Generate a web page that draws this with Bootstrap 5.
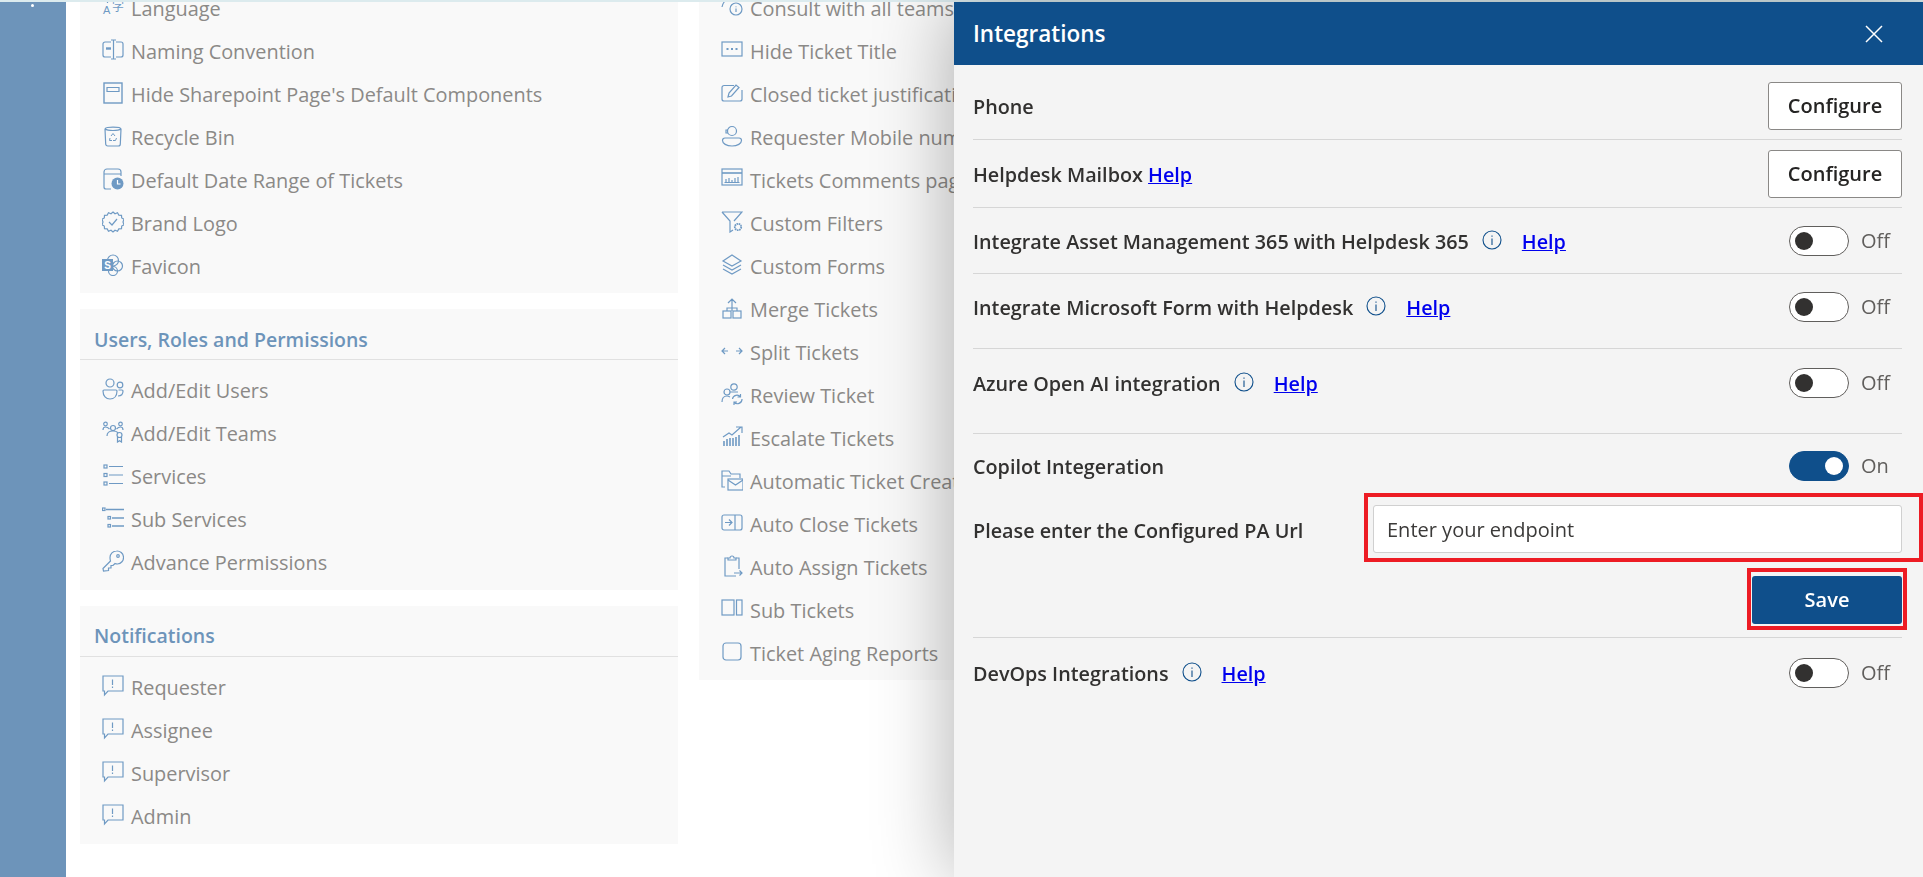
<!DOCTYPE html>
<html lang="en">
<head>
  <meta charset="UTF-8" />
  <meta name="viewport" content="width=device-width, initial-scale=1" />
  <title>Integrations</title>
  <link href="https://cdn.jsdelivr.net/npm/bootstrap@5.3.0/dist/css/bootstrap.min.css" rel="stylesheet" />
  <style>
    html, body {
      height: 100%;
      overflow: hidden;
      background: #fff;
      font-family: "Open Sans", "Liberation Sans", sans-serif;
    }

    .top-line { height: 2px; background: #dcebee; }

    .side-rail {
      width: 66px;
      background: #6d94ba;
      padding: 2px 0 0 31px;
    }
    .rail-dot { display: block; width: 3px; height: 3px; border-radius: 50%; background: #fff; }

    .page-body { height: 875px; overflow: hidden; }
    .settings-area { padding-left: 14px; margin-top: -15px; gap: 21px; }
    .settings-col { width: 598px; flex: none; gap: 16px; }

    .settings-card { background: #f9f9f9; padding-bottom: 5px; }
    .settings-head {
      height: 51px;
      padding: 19px 14px 0;
      border-bottom: 1px solid #e1e1e1;
      margin-bottom: 9px;
      color: #6d94ba;
      font-size: 19.5px;
      font-weight: 600;
      line-height: 24px;
    }
    .settings-card:last-child .settings-head { padding-top: 18px; }
    .settings-head ~ .settings-item:last-child { margin-bottom: 1px; }
    .settings-item {
      height: 43px;
      padding-left: 22px;
      gap: 7px;
      color: #8b8987;
      font-size: 19.9px;
      white-space: nowrap;
    }
    .item-icon {
      width: 22px;
      height: 22px;
      flex: none;
      margin-bottom: 4px;
      fill: none;
      stroke: #6f9ac4;
      stroke-width: 1.2;
    }

    .integrations-panel.offcanvas {
      --bs-offcanvas-width: 969px;
      top: 2px;
      border-left: 0;
      background: #f4f4f4;
      box-shadow: 0 0 75px rgba(0, 0, 0, .32);
    }
    .panel-head {
      height: 63px;
      padding: 0 39px 0 19px;
      background: #0f4f8b;
      color: #fff;
      font-size: 22.5px;
      font-weight: 600;
    }
    .panel-close { background: none; border: 0; padding: 0; line-height: 0; }
    .panel-body { padding: 0 21px 0 19px; color: #323130; font-size: 19.8px; font-weight: 600; }

    .panel-row { border-bottom: 1px solid #d6d6d6; }
    .row-label { padding-top: 2px; }
    .row-phone { height: 75px; padding-top: 8px; }
    .row-mailbox { height: 68px; }
    .row-asset { height: 66px; }
    .row-form { height: 75px; padding-bottom: 8px; }
    .row-azure { height: 85px; padding-bottom: 16px; }
    .row-devops { height: 70px; border-bottom: 0; }

    .panel-body a { color: #00e; }
    .info-icon { width: 20px; height: 20px; margin: 0 20px 4px 13px; fill: none; stroke: #0f4f8b; stroke-width: 1.1; flex: none; }

    .btn-configure {
      width: 134px;
      height: 48px;
      background: #fff;
      border: 1px solid #8a8886;
      border-radius: 3px;
      color: #252423;
      font-size: 20px;
      font-weight: 600;
    }

    .switch-wrap { width: 113px; gap: 12px; font-weight: 400; color: #605e5c; font-size: 20px; }
    .switch-track {
      width: 60px;
      height: 30px;
      flex: none;
      padding: 0 5px;
      background: #fff;
      border: 1px solid #605e5c;
      border-radius: 15px;
    }
    .switch-thumb { width: 18px; height: 18px; border-radius: 50%; background: #323130; }
    .switch-track.is-on { background: #0f4f8b; border-color: #0f4f8b; justify-content: flex-end; }
    .is-on .switch-thumb { background: #fff; }

    .row-copilot { padding-top: 17px; }
    .copilot-line { height: 30px; }
    .url-line { margin-top: 12px; }
    .url-label { width: 391px; flex: none; padding-top: 6px; }
    .red-box { border: 4px solid #ed1c24; background: #f4f4f4; }
    .url-box { flex: 1; margin-right: -21px; padding: 8px 17px 5px 5px; height: 69px; }
    .url-input {
      height: 48px;
      border: 1px solid #d0d0d0;
      border-radius: 3px;
      color: #323130;
      font-size: 20px;
      font-weight: 400;
      padding: 0 13px;
    }
    .url-input::placeholder { color: #3b3a39; opacity: 1; }
    .save-line { margin-top: 6px; padding-bottom: 7px; }
    .save-box { margin-right: -5px; padding: 4px 1px 2px; }
    .btn-save {
      display: block;
      width: 150px;
      height: 48px;
      background: #0f4f8b;
      border: 0;
      border-radius: 3px;
      color: #fff;
      font-size: 20px;
      font-weight: 600;
    }
  </style>
</head>
<body>
  <!-- icon sprite -->
  <svg width="0" height="0" class="position-absolute">
    <symbol id="i-lang" viewBox="0 0 22 22">
      <path d="M1 3h9M5.500 3v4" />
      <text x="1" y="18" font-size="11" fill="#6f9ac4" stroke="none" font-family="Liberation Sans, sans-serif">A</text>
      <text x="10" y="15" font-size="12" fill="#6f9ac4" stroke="none" font-family="Noto Sans CJK SC, sans-serif">字</text>
    </symbol>
    <symbol id="i-naming" viewBox="0 0 22 22">
      <path d="M9 3H3a2 2 0 0 0-2 2v11a2 2 0 0 0 2 2h6M14 3h5a2 2 0 0 1 2 2v11a2 2 0 0 1-2 2h-5"/>
      <path d="M9 1h5M9 20h5M11.500 1v19"/>
      <path d="M4 9.500h5" stroke-width="2.400"/>
    </symbol>
    <symbol id="i-hide" viewBox="0 0 22 22">
      <rect x="2" y="1" width="18" height="20" stroke-width="1.400"/>
      <path d="M5 5.500h12v4H5zM2 11"/>
    </symbol>
    <symbol id="i-bin" viewBox="0 0 22 22">
      <path d="M3 4c0-2.500 16-2.500 16 0M3 4c3 2 13 2 16 0M3 4l.7 15a2 2 0 0 0 2 2h10.600a2 2 0 0 0 2-2L19 4"/>
      <path d="M9 11l2-2.500 2 2.500M14.500 13l-1 2.500h-2.500M8 13l-.5 2.500h2.500" stroke-width="1"/>
    </symbol>
    <symbol id="i-date" viewBox="0 0 22 22">
      <path d="M2 19V4a3 3 0 0 1 3-3h11a3 3 0 0 1 3 3v4M2 6h17M2 19a2 2 0 0 0 2 2h5"/>
      <circle cx="15.500" cy="15.500" r="6" fill="#6f9ac4" stroke="none"/>
      <path d="M15.500 12v4h3" stroke="#fff"/>
    </symbol>
    <symbol id="i-brand" viewBox="0 0 22 22">
      <path d="M11 1l2 1.800 2.500-1 1.300 2.300 2.700.2.200 2.700 2.300 1.300-1 2.700 1 2.700-2.300 1.300-.2 2.700-2.700.2-1.300 2.300-2.500-1L11 21l-2-1.800-2.500 1-1.300-2.300-2.700-.2-.2-2.700L0 13.700l1-2.700-1-2.700 2.300-1.300.2-2.700 2.700-.2 1.300-2.300 2.500 1z"/>
      <path d="M7 11l3 3 5-6"/>
    </symbol>
    <symbol id="i-sp" viewBox="0 0 22 22">
      <circle cx="11" cy="6.500" r="5.500"/>
      <circle cx="15.500" cy="12" r="5"/>
      <circle cx="11" cy="17" r="4.500"/>
      <rect x="0" y="5" width="11" height="12" fill="#6f9ac4" stroke="none"/>
      <text x="5.500" y="15" text-anchor="middle" font-size="10" font-weight="700" fill="#fff" stroke="none" font-family="Liberation Sans, sans-serif">S</text>
    </symbol>
    <symbol id="i-users" viewBox="0 0 22 22">
      <circle cx="8" cy="5" r="4"/>
      <circle cx="18" cy="7" r="2.800"/>
      <path d="M2 12h12a1 1 0 0 1 1 1c0 5-3 8-7 8s-7-3-7-8a1 1 0 0 1 1-1zM16.500 12h3.500a1 1 0 0 1 1 1c0 3-2 5-5 5"/>
    </symbol>
    <symbol id="i-teams" viewBox="0 0 22 22">
      <circle cx="3.500" cy="3" r="1.800"/>
      <circle cx="18.500" cy="3" r="1.800"/>
      <circle cx="11" cy="7" r="2.500"/>
      <circle cx="17.500" cy="14" r="2.500"/>
      <path d="M1 9c0-2 1-3 2.500-3s3 1 4 2M21 9c0-2-1-3-2.500-3s-3 1-4 2M5 15c0-3 2-5 6-5s4 1 5 2M15.500 16v5l2-1.300 2 1.300v-5"/>
    </symbol>
    <symbol id="i-services" viewBox="0 0 22 22">
      <path d="M7 2.500h14M7 11h14M7 19.500h14"/>
      <rect x="2" y="1" width="3" height="3"/>
      <rect x="2" y="9.500" width="3" height="3"/>
      <rect x="2" y="18" width="3" height="3"/>
    </symbol>
    <symbol id="i-subsvc" viewBox="0 0 22 22">
      <path d="M4 2.500h18M10 11h12M10 19h12" stroke-width="1.400"/>
      <rect x=".5" y="1" width="2.500" height="2.500"/>
      <rect x="6" y="9.500" width="2.500" height="2.500"/>
      <rect x="6" y="17.500" width="2.500" height="2.500"/>
    </symbol>
    <symbol id="i-key" viewBox="0 0 22 22">
      <path d="M14.500 1a6.500 6.500 0 0 1 1 13c-1 0-2-.2-2.500-.5L11 15.500H9V18H6.500v2.500l-5 .5L1 18.500l7.500-7.500c-.2-.7-.5-1.700-.5-3.500A6.500 6.500 0 0 1 14.500 1z"/>
      <circle cx="16" cy="6" r="1.300"/>
    </symbol>
    <symbol id="i-alert" viewBox="0 0 22 22">
      <path d="M1 1h20v15H6l-3.500 4V16H1z"/>
      <path d="M10.500 4.500v5.500M10.500 11.500v1.500"/>
    </symbol>
    <symbol id="i-consult" viewBox="0 0 22 22">
      <circle cx="15" cy="13" r="6"/>
      <path d="M15 10.500v.8M15 12.500v3.500M1 11c1-5 4-7 6-7M5 1l4 3"/>
    </symbol>
    <symbol id="i-dots" viewBox="0 0 22 22">
      <rect x="1" y="3" width="20" height="14"/>
      <path d="M5.500 10h2M10 10h2M14.500 10h2" stroke-width="2"/>
    </symbol>
    <symbol id="i-note" viewBox="0 0 22 22">
      <path d="M13 3.500H3a2 2 0 0 0-2 2V17a2 2 0 0 0 2 2h16a2 2 0 0 0 2-2V8"/>
      <path d="M7 15l1-4 7-8 3 2.500-7.500 8.500z"/>
    </symbol>
    <symbol id="i-mobile" viewBox="0 0 22 22">
      <circle cx="11" cy="6" r="4.500"/>
      <path d="M7 5h-2v3h2"/>
      <path d="M4 13h14a2.500 2.500 0 0 1 2.500 2.500c0 3-4 5.500-9.500 5.500s-9.500-2.500-9.500-5.500A2.500 2.500 0 0 1 4 13z"/>
    </symbol>
    <symbol id="i-chart" viewBox="0 0 22 22">
      <rect x="1" y="1" width="20" height="16"/>
      <path d="M1 5h20" stroke-width="1.600"/>
      <path d="M5 14v-3M8 14v-4M11 14v-2M14 14v-4M17 14v-5M3.500 14.500h15"/>
    </symbol>
    <symbol id="i-filter" viewBox="0 0 22 22">
      <path d="M1 1h20l-8 9M1 1l8 9v11l3-2"/>
      <circle cx="17" cy="16" r="3.200" stroke-width="1.800" stroke-dasharray="1.600 .6"/>
    </symbol>
    <symbol id="i-layers" viewBox="0 0 22 22">
      <path d="M11 1l9 6-9 5-9-5zM2 11l9 5 9-5M2 15l9 5 9-5"/>
    </symbol>
    <symbol id="i-merge" viewBox="0 0 22 22">
      <rect x="2" y="14" width="8" height="7"/>
      <rect x="12" y="14" width="8" height="7"/>
      <path d="M11 14V2M7 6l4-4 4 4M6 14v-3h10v3"/>
    </symbol>
    <symbol id="i-split" viewBox="0 0 22 22">
      <path d="M1 11h6M4 8l-3 3 3 3M15 11h6M18 8l3 3-3 3"/>
    </symbol>
    <symbol id="i-review" viewBox="0 0 22 22">
      <circle cx="13" cy="4" r="3.200"/>
      <circle cx="6" cy="9" r="3"/>
      <path d="M1 19c0-4 2-6 5-6 1 0 2 .5 3 1M9 9h8"/>
      <path d="M11.500 16a4.500 4.500 0 0 1 8-2M21 16a4.500 4.500 0 0 1-8 3M19.500 11v3h-3M13 22v-3h3"/>
    </symbol>
    <symbol id="i-escalate" viewBox="0 0 22 22">
      <path d="M2 11l6-4 3 2 9-8M15 1h6v6"/>
      <path d="M3 20v-5M6 20v-7M9 20v-8M12 20v-8M15 20v-9M18 20v-11" stroke-width="1.600"/>
    </symbol>
    <symbol id="i-mailfolder" viewBox="0 0 22 22">
      <path d="M4 18H1V2h7l2 3h9v4M1 7h9"/>
      <rect x="7" y="10" width="15" height="11"/>
      <path d="M7 11l7.500 5 7.500-5"/>
    </symbol>
    <symbol id="i-close-t" viewBox="0 0 22 22">
      <rect x="1" y="3" width="20" height="15" rx="2"/>
      <path d="M14 3v15M4 10.500h7M8 7.500l3 3-3 3"/>
    </symbol>
    <symbol id="i-clip" viewBox="0 0 22 22">
      <path d="M7 3H4v18h11M15 3h3v11"/>
      <path d="M7 5V3h2a2 2 0 0 1 4 0h2v2z"/>
      <path d="M13 18h8M18.500 15.500l2.500 2.500-2.500 2.500"/>
    </symbol>
    <symbol id="i-sub" viewBox="0 0 22 22">
      <rect x="1" y="2" width="12" height="15"/>
      <rect x="15.500" y="2" width="5.500" height="15"/>
    </symbol>
    <symbol id="i-square" viewBox="0 0 22 22">
      <rect x="2" y="2" width="18" height="17" rx="3"/>
    </symbol>
  </svg>

  <div class="top-line"></div>
  <div class="d-flex page-body">
    <div class="side-rail flex-shrink-0"><span class="rail-dot"></span></div>

    <div class="d-flex align-items-start settings-area">
      <!-- Left settings -->
      <div class="d-flex flex-column settings-col">
        <div class="settings-card">
          <div class="d-flex align-items-center settings-item"><svg class="item-icon"><use href="#i-lang"/></svg>Language</div>
          <div class="d-flex align-items-center settings-item"><svg class="item-icon"><use href="#i-naming"/></svg>Naming Convention</div>
          <div class="d-flex align-items-center settings-item"><svg class="item-icon"><use href="#i-hide"/></svg>Hide Sharepoint Page's Default Components</div>
          <div class="d-flex align-items-center settings-item"><svg class="item-icon"><use href="#i-bin"/></svg>Recycle Bin</div>
          <div class="d-flex align-items-center settings-item"><svg class="item-icon"><use href="#i-date"/></svg>Default Date Range of Tickets</div>
          <div class="d-flex align-items-center settings-item"><svg class="item-icon"><use href="#i-brand"/></svg>Brand Logo</div>
          <div class="d-flex align-items-center settings-item"><svg class="item-icon"><use href="#i-sp"/></svg>Favicon</div>
        </div>
        <div class="settings-card">
          <div class="settings-head">Users, Roles and Permissions</div>
          <div class="d-flex align-items-center settings-item"><svg class="item-icon"><use href="#i-users"/></svg>Add/Edit Users</div>
          <div class="d-flex align-items-center settings-item"><svg class="item-icon"><use href="#i-teams"/></svg>Add/Edit Teams</div>
          <div class="d-flex align-items-center settings-item"><svg class="item-icon"><use href="#i-services"/></svg>Services</div>
          <div class="d-flex align-items-center settings-item"><svg class="item-icon"><use href="#i-subsvc"/></svg>Sub Services</div>
          <div class="d-flex align-items-center settings-item"><svg class="item-icon"><use href="#i-key"/></svg>Advance Permissions</div>
        </div>
        <div class="settings-card">
          <div class="settings-head">Notifications</div>
          <div class="d-flex align-items-center settings-item"><svg class="item-icon"><use href="#i-alert"/></svg>Requester</div>
          <div class="d-flex align-items-center settings-item"><svg class="item-icon"><use href="#i-alert"/></svg>Assignee</div>
          <div class="d-flex align-items-center settings-item"><svg class="item-icon"><use href="#i-alert"/></svg>Supervisor</div>
          <div class="d-flex align-items-center settings-item"><svg class="item-icon"><use href="#i-alert"/></svg>Admin</div>
        </div>
      </div>

      <!-- Middle settings, runs under the panel -->
      <div class="d-flex flex-column settings-col">
        <div class="settings-card">
          <div class="d-flex align-items-center settings-item"><svg class="item-icon"><use href="#i-consult"/></svg>Consult with all teams</div>
          <div class="d-flex align-items-center settings-item"><svg class="item-icon"><use href="#i-dots"/></svg>Hide Ticket Title</div>
          <div class="d-flex align-items-center settings-item"><svg class="item-icon"><use href="#i-note"/></svg>Closed ticket justification</div>
          <div class="d-flex align-items-center settings-item"><svg class="item-icon"><use href="#i-mobile"/></svg>Requester Mobile number</div>
          <div class="d-flex align-items-center settings-item"><svg class="item-icon"><use href="#i-chart"/></svg>Tickets Comments page</div>
          <div class="d-flex align-items-center settings-item"><svg class="item-icon"><use href="#i-filter"/></svg>Custom Filters</div>
          <div class="d-flex align-items-center settings-item"><svg class="item-icon"><use href="#i-layers"/></svg>Custom Forms</div>
          <div class="d-flex align-items-center settings-item"><svg class="item-icon"><use href="#i-merge"/></svg>Merge Tickets</div>
          <div class="d-flex align-items-center settings-item"><svg class="item-icon"><use href="#i-split"/></svg>Split Tickets</div>
          <div class="d-flex align-items-center settings-item"><svg class="item-icon"><use href="#i-review"/></svg>Review Ticket</div>
          <div class="d-flex align-items-center settings-item"><svg class="item-icon"><use href="#i-escalate"/></svg>Escalate Tickets</div>
          <div class="d-flex align-items-center settings-item"><svg class="item-icon"><use href="#i-mailfolder"/></svg>Automatic Ticket Creation</div>
          <div class="d-flex align-items-center settings-item"><svg class="item-icon"><use href="#i-close-t"/></svg>Auto Close Tickets</div>
          <div class="d-flex align-items-center settings-item"><svg class="item-icon"><use href="#i-clip"/></svg>Auto Assign Tickets</div>
          <div class="d-flex align-items-center settings-item"><svg class="item-icon"><use href="#i-sub"/></svg>Sub Tickets</div>
          <div class="d-flex align-items-center settings-item"><svg class="item-icon"><use href="#i-square"/></svg>Ticket Aging Reports</div>
        </div>
      </div>
    </div>
  </div>

  <!-- Integrations panel -->
  <div class="offcanvas offcanvas-end show integrations-panel" data-bs-backdrop="false" data-bs-scroll="true">
    <div class="d-flex align-items-center justify-content-between panel-head">
      <span>Integrations</span>
      <button type="button" class="panel-close" aria-label="Close">
        <svg width="20" height="20" viewBox="0 0 20 20" fill="none" stroke="#fff" stroke-width="1.500"><path d="M2 2l16 16M18 2L2 18"/></svg>
      </button>
    </div>
    <div class="panel-body">
      <div class="d-flex align-items-center justify-content-between panel-row row-phone">
        <span class="row-label">Phone</span>
        <button type="button" class="btn-configure">Configure</button>
      </div>
      <div class="d-flex align-items-center justify-content-between panel-row row-mailbox">
        <span class="row-label">Helpdesk Mailbox <a href="#">Help</a></span>
        <button type="button" class="btn-configure">Configure</button>
      </div>
      <div class="d-flex align-items-center justify-content-between panel-row row-asset">
        <span class="d-flex align-items-center row-label">Integrate Asset Management 365 with Helpdesk 365
          <svg class="info-icon" viewBox="0 0 20 20"><circle cx="10" cy="10" r="9"/><path d="M10 8.500V15M10 5.500v1.200"/></svg><a href="#">Help</a></span>
        <div class="d-flex align-items-center switch-wrap"><div class="d-flex align-items-center switch-track"><div class="switch-thumb"></div></div>Off</div>
      </div>
      <div class="d-flex align-items-center justify-content-between panel-row row-form">
        <span class="d-flex align-items-center row-label">Integrate Microsoft Form with Helpdesk
          <svg class="info-icon" viewBox="0 0 20 20"><circle cx="10" cy="10" r="9"/><path d="M10 8.500V15M10 5.500v1.200"/></svg><a href="#">Help</a></span>
        <div class="d-flex align-items-center switch-wrap"><div class="d-flex align-items-center switch-track"><div class="switch-thumb"></div></div>Off</div>
      </div>
      <div class="d-flex align-items-center justify-content-between panel-row row-azure">
        <span class="d-flex align-items-center row-label">Azure Open AI integration
          <svg class="info-icon" viewBox="0 0 20 20"><circle cx="10" cy="10" r="9"/><path d="M10 8.500V15M10 5.500v1.200"/></svg><a href="#">Help</a></span>
        <div class="d-flex align-items-center switch-wrap"><div class="d-flex align-items-center switch-track"><div class="switch-thumb"></div></div>Off</div>
      </div>
      <div class="panel-row row-copilot">
        <div class="d-flex align-items-center justify-content-between copilot-line">
          <span class="row-label">Copilot Integeration</span>
          <div class="d-flex align-items-center switch-wrap"><div class="d-flex align-items-center switch-track is-on"><div class="switch-thumb"></div></div>On</div>
        </div>
        <div class="d-flex align-items-center url-line">
          <label class="url-label" for="paUrl">Please enter the Configured PA Url</label>
          <div class="red-box url-box">
            <input id="paUrl" type="text" class="form-control url-input" placeholder="Enter your endpoint" />
          </div>
        </div>
        <div class="d-flex justify-content-end save-line">
          <div class="red-box save-box"><button type="button" class="btn-save">Save</button></div>
        </div>
      </div>
      <div class="d-flex align-items-center justify-content-between panel-row row-devops">
        <span class="d-flex align-items-center row-label">DevOps Integrations
          <svg class="info-icon" viewBox="0 0 20 20"><circle cx="10" cy="10" r="9"/><path d="M10 8.500V15M10 5.500v1.200"/></svg><a href="#">Help</a></span>
        <div class="d-flex align-items-center switch-wrap"><div class="d-flex align-items-center switch-track"><div class="switch-thumb"></div></div>Off</div>
      </div>
    </div>
  </div>

  <script src="https://cdn.jsdelivr.net/npm/bootstrap@5.3.0/dist/js/bootstrap.bundle.min.js"></script>
</body>
</html>
